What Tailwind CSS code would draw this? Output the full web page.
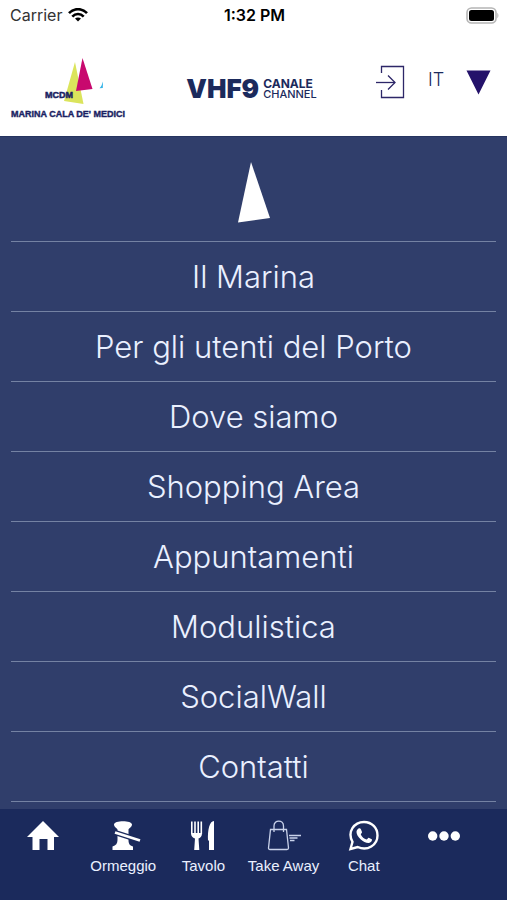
<!DOCTYPE html>
<html lang="it">
<head>
  <meta charset="UTF-8" />
  <meta name="viewport" content="width=device-width, initial-scale=1.0" />
  <title>Marina Cala de' Medici</title>
  <script src="https://cdn.jsdelivr.net/npm/@tailwindcss/browser@4"></script>
</head>
<body class="h-screen flex flex-col bg-[#303e6b] font-['Inter','Liberation_Sans',sans-serif] overflow-hidden">

  <!-- Status bar -->
  <div class="grid grid-cols-3 items-center h-[30px] shrink-0 bg-white pl-[10px] pr-[8px] text-black">
    <div class="flex items-center gap-[6px] text-[16px] text-[#333333]">
      <span>Carrier</span>
      <svg class="w-[20px] h-[14px]" viewBox="0 0 20 14" fill="none" stroke="#000" stroke-width="2.6">
        <path d="M1 5.2C6-.2 14-.2 19 5.2" />
        <path d="M4.3 8.6C7.5 5.2 12.5 5.2 15.7 8.6" />
        <path d="M10 13.6L7 10.6C8.6 9 11.4 9 13 10.6Z" fill="#000" stroke="none" />
      </svg>
    </div>
    <div class="text-center text-[16px] font-semibold">1:32 PM</div>
    <svg class="justify-self-end w-[33px] h-[17px]" viewBox="0 0 33 17">
      <rect x="1" y="1" width="29" height="15" rx="4.5" fill="#fff" stroke="#b5b5b5" stroke-width="1.6" />
      <rect x="3" y="3" width="25" height="11" rx="2.5" fill="#000" />
      <path d="M31.3 6C32.8 6.6 32.8 10.4 31.3 11Z" fill="#b5b5b5" />
    </svg>
  </div>

  <!-- Header -->
  <header class="flex items-center justify-between h-[106px] shrink-0 bg-white pl-[10px] pr-[16px] pt-[6px]">
    <a href="#" aria-label="Marina Cala de' Medici">
      <svg class="w-[118px] h-[64px]" viewBox="0 0 118 64">
        <path d="M65 8L73.5 50L54 47Z" fill="#dbe45c" />
        <path d="M72.5 4L82.5 35L66 37Z" fill="#c8096e" />
        <path d="M93 27.5L92.8 34L89.5 34.3C91.5 32.5 92 30 93 27.5Z" fill="#35b4e8" />
        <text x="35" y="44" font-family="Liberation Sans, sans-serif" font-size="9" font-weight="700" fill="#1b1f63" stroke="#1b1f63" stroke-width="0.5">MCDM</text>
        <text x="1" y="63" font-family="Liberation Sans, sans-serif" font-size="9" font-weight="700" fill="#1b1f63" stroke="#1b1f63" stroke-width="0.4">MARINA CALA DE' MEDICI</text>
      </svg>
    </a>

    <div class="flex items-center gap-[4px] pt-[5px] text-[#1b2a5c]">
      <span class="text-[26px] leading-[26px] font-black">VHF9</span>
      <span class="leading-[11px]">
        <span class="block text-[12px] font-bold">CANALE</span>
        <span class="block text-[11px] font-medium">CHANNEL</span>
      </span>
    </div>

    <div class="flex items-center gap-[23px] pb-[9px]">
      <button type="button" aria-label="Accedi">
        <svg class="w-[30px] h-[34px]" viewBox="0 0 30 34" fill="none" stroke="#2d2768" stroke-width="1.3">
          <path d="M6.5 8V1.5H28.5V32.5H6.5V25" />
          <path d="M1 17.5H20" />
          <path d="M13 10.5L20 17.5L13 24.5" />
        </svg>
      </button>
      <div class="relative">
        <label for="lang" class="sr-only">Lingua</label>
        <select id="lang" class="block appearance-none w-[63px] pb-[4px] text-[18px] leading-[30px] font-light text-[#1b2a5c] bg-transparent">
          <option>IT</option>
          <option>EN</option>
        </select>
        <svg class="absolute right-0 top-[5px] w-[25px] h-[25px] pointer-events-none" viewBox="0 0 25 25">
          <path d="M0.5 0.5H24.5L12.5 24.5Z" fill="#24126a" />
        </svg>
      </div>
    </div>
  </header>

  <!-- Menu -->
  <main class="flex-1 min-h-0 overflow-hidden px-[11px] border-t border-[#26345f]">
    <div class="flex items-center justify-center h-[104px]">
      <svg class="w-[34px] h-[61px] mt-[7px]" viewBox="0 0 34 61">
        <path d="M14 0L33 56L1 60.5Z" fill="#fff" />
      </svg>
    </div>
    <nav class="text-center text-[31px] leading-[69px] font-light text-[#eaf0ff]">
      <a href="#" class="block border-t border-[#7482a3]">Il Marina</a>
      <a href="#" class="block border-t border-[#7482a3]">Per gli utenti del Porto</a>
      <a href="#" class="block border-t border-[#7482a3]">Dove siamo</a>
      <a href="#" class="block border-t border-[#7482a3]">Shopping Area</a>
      <a href="#" class="block border-t border-[#7482a3]">Appuntamenti</a>
      <a href="#" class="block border-t border-[#7482a3]">Modulistica</a>
      <a href="#" class="block border-t border-[#7482a3]">SocialWall</a>
      <a href="#" class="block border-y border-[#7482a3]">Contatti</a>
    </nav>
  </main>

  <!-- Bottom bar -->
  <footer class="grid grid-cols-6 h-[91px] shrink-0 bg-[#1b2a5c] pl-[3px] pr-[23px] pt-[11px] font-['Liberation_Sans',sans-serif] text-[15px] leading-[20px] text-[#eaf0ff] whitespace-nowrap">
    <a href="#" aria-label="Home" class="flex flex-col items-center">
      <svg class="w-[32px] h-[32px]" viewBox="0 0 32 32" fill="#fff">
        <path d="M16 1L32 17H27V30H20.5V19H12.5V30H5.5V17H0Z" />
      </svg>
    </a>
    <a href="#" class="flex flex-col items-center gap-[4px]">
      <svg class="w-[36px] h-[32px]" viewBox="0 0 36 32" fill="#fff">
        <path d="M9 4.5C9 0 27 0 27 4.5C27 7 24 8 23.5 9.5V20C23.5 23.5 24.5 25.5 28 26.500V30H7.500V26.500C11 25.500 12.500 23.500 12.500 20V9.500C12 8 9 7 9 4.500Z" />
        <path d="M10 12.500L35 20.500" fill="none" stroke="#1b2a5c" stroke-width="5.500" />
        <path d="M10 12.500L35 20.500" fill="none" stroke="#fff" stroke-width="2.800" />
      </svg>
      <span>Ormeggio</span>
    </a>
    <a href="#" class="flex flex-col items-center gap-[4px]">
      <svg class="w-[32px] h-[32px]" viewBox="0 0 32 32" fill="#fff">
        <path d="M4 13H15C15 17 13 18 11.500 18.500L12.300 30H7.200L8 18.500C6.500 18 4 17 4 13Z" />
        <path d="M4.800 1.500V14M8 1.500V14M11.200 1.500V14M14.300 1.500V14" stroke="#fff" stroke-width="1.600" />
        <path d="M27 1V30H22V20.500H21C20.500 10 22.500 1 27 1Z" />
      </svg>
      <span>Tavolo</span>
    </a>
    <a href="#" class="flex flex-col items-center gap-[4px]">
      <svg class="w-[36px] h-[32px]" viewBox="0 0 36 32" fill="none" stroke="#c9d2ea" stroke-width="1.3">
        <path d="M4.500 9.500H20.500L22.500 28C22.500 29 22 29.500 21 29.500H4C3 29.500 2.500 29 2.500 28Z" />
        <path d="M8 12V6C8 -0.500 17.500 -0.500 17.500 6V12" />
        <path d="M23 15.500H35M23.500 18H31.500M24 20.500H28.500" />
      </svg>
      <span>Take Away</span>
    </a>
    <a href="#" class="flex flex-col items-center gap-[4px]">
      <svg class="w-[32px] h-[32px]" viewBox="0 0 32 32">
        <path d="M2.500 29L4.500 21.800C-1 12 6 2 16 2C24 2 29.500 8 29.500 15.500C29.500 25 19.500 31.500 9.700 27Z" fill="none" stroke="#fff" stroke-width="2.4" />
        <path d="M10.500 8.500C11.500 8 12.500 8.300 12.900 9.200L14 12C14.200 12.800 12.800 14 12.800 14.500C14 17 16 18.800 18.500 19.600C19.200 19.500 20 17.600 20.700 17.700L23.800 19.200C24.500 20 23.500 22.500 21 23C16 23.500 8.500 17 8.500 12C8.500 10.500 9.300 9.200 10.500 8.500Z" fill="#fff" />
      </svg>
      <span>Chat</span>
    </a>
    <button type="button" aria-label="Altro" class="flex flex-col items-center">
      <svg class="w-[32px] h-[32px]" viewBox="0 0 32 32" fill="#fff">
        <circle cx="4.7" cy="16" r="4.7" />
        <circle cx="16" cy="16" r="4.7" />
        <circle cx="27.3" cy="16" r="4.7" />
      </svg>
    </button>
  </footer>

</body>
</html>
